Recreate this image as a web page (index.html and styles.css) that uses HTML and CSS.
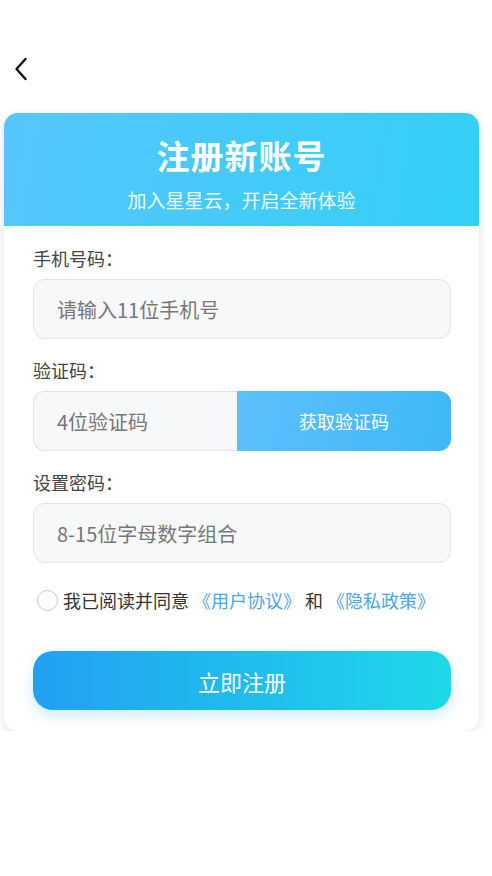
FILE: index.html
```html
<!DOCTYPE html>
<html lang="zh-CN">
<head>
    <meta charset="UTF-8">
    <meta name="viewport" content="width=device-width, initial-scale=1.0">
    <title>注册新账号</title>
    <link rel="stylesheet" href="styles.css">
</head>
<body>

<!-- 顶部返回 -->
<div class="top-bar">
    <svg class="back-icon" width="14" height="24" viewBox="0 0 14 24">
        <path d="M11.5 2 L2.5 12 L11.5 22" fill="none" stroke="#111" stroke-width="2.4" stroke-linecap="round" stroke-linejoin="round"/>
    </svg>
</div>

<!-- 注册卡片 -->
<div class="card">
    <div class="card-header">
        <div class="title">注册新账号</div>
        <div class="subtitle">加入星星云，开启全新体验</div>
    </div>

    <form class="card-body">
        <label class="field-label">手机号码：</label>
        <div class="field">请输入11位手机号</div>

        <label class="field-label">验证码：</label>
        <div class="code-row">
            <div class="field code-field">4位验证码</div>
            <button type="button" class="code-btn">获取验证码</button>
        </div>

        <label class="field-label">设置密码：</label>
        <div class="field">8-15位字母数字组合</div>

        <div class="agree">
            <span class="radio"></span>
            <span>我已阅读并同意</span>
            <a class="link">《用户协议》</a>
            <span>和</span>
            <a class="link">《隐私政策》</a>
        </div>

        <button type="button" class="submit-btn">立即注册</button>
    </form>
</div>

</body>
</html>
```

FILE: styles.css
```css
body {
    margin: 0;
    background: #fff;
    font-family: "Noto Sans CJK SC", "Noto Sans", sans-serif;
    color: #333;
}

/* 顶部返回 */
.top-bar {
    height: 113px;
    padding-left: 14px;
    padding-top: 57px;
    box-sizing: border-box;
}

.back-icon {
    display: block;
}

/* 卡片 */
.card {
    margin-left: 4px;
    width: 475px;
    background: #fff;
    border-radius: 14px;
    box-shadow: 0 2px 10px rgba(0, 0, 0, 0.12);
    overflow: hidden;
}

.card-header {
    height: 113px;
    background: linear-gradient(100deg, #56c6fb, #33cff7);
    color: #fff;
    text-align: center;
    box-sizing: border-box;
    padding-top: 19px;
}

.title {
    font-size: 33px;
    font-weight: bold;
    line-height: 46px;
    letter-spacing: 1px;
}

.subtitle {
    font-size: 19px;
    line-height: 26px;
    margin-top: 9px;
    opacity: 0.92;
}

.card-body {
    padding: 20px 28px 21px 29px;
    display: flex;
    flex-direction: column;
}

.field-label {
    font-size: 18px;
    line-height: 24px;
    color: #444;
    margin-bottom: 9px;
}

.field {
    height: 60px;
    box-sizing: border-box;
    background: #f7f8fa;
    border: 1px solid #e3e3e3;
    border-radius: 12px;
    padding-left: 23px;
    display: flex;
    align-items: center;
    font-size: 20px;
    color: #777;
    margin-bottom: 19px;
}

.code-row {
    display: flex;
    height: 60px;
    margin-bottom: 19px;
}

.code-field {
    flex: 0 0 204px;
    border-right: none;
    border-radius: 12px 0 0 12px;
    margin-bottom: 0;
}

.code-btn {
    flex: 1;
    border: none;
    border-radius: 0 12px 12px 0;
    background: linear-gradient(100deg, #5cc0fc, #3fb8f6);
    color: #fff;
    font-family: inherit;
    font-size: 18px;
}

.agree {
    display: flex;
    align-items: center;
    font-size: 18px;
    color: #333;
    margin-top: 6px;
    padding-left: 4px;
    height: 24px;
}

.radio {
    width: 21px;
    height: 21px;
    border: 1.5px solid #c8c8c8;
    border-radius: 50%;
    margin-right: 5px;
    box-sizing: border-box;
}

.link {
    color: #4aa6e6;
    margin: 0 4px;
}

.submit-btn {
    margin-top: 39px;
    height: 59px;
    border: none;
    border-radius: 20px;
    background: linear-gradient(90deg, #21a0f2, #1ed8e8);
    color: #fff;
    font-family: inherit;
    font-size: 22px;
    box-shadow: 0 6px 14px rgba(40, 170, 240, 0.22);
}
```
